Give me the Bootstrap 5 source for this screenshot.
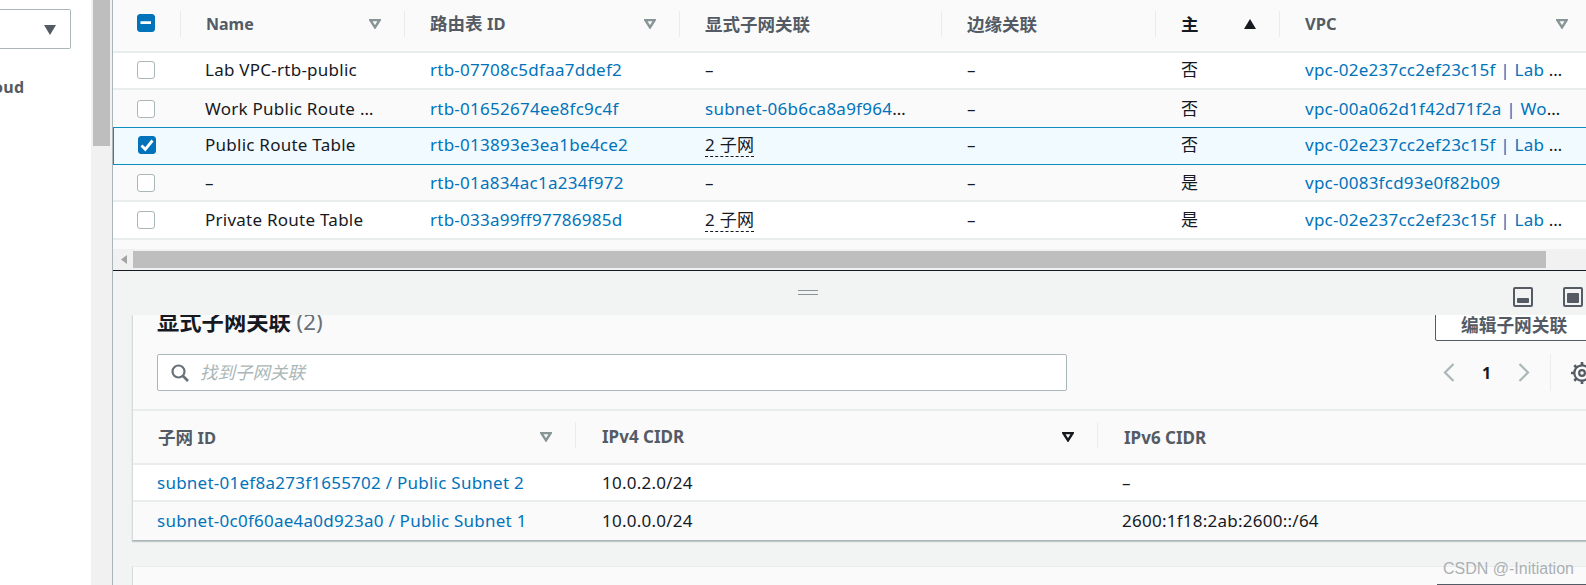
<!DOCTYPE html>
<html lang="zh">
<head>
<meta charset="utf-8">
<title>路由表</title>
<link href="https://cdn.jsdelivr.net/npm/bootstrap@5.3.0/dist/css/bootstrap.min.css" rel="stylesheet">
<style>
html,body{height:585px;overflow:hidden}
body{font-family:"Noto Sans","Noto Sans CJK SC",sans-serif;font-size:17px;letter-spacing:.25px;color:#16191f;background:#fff}
a{color:#0073bb;text-decoration:none}
.shell{width:1586px;height:585px}
.side{width:91px;flex:none;background:#fff;overflow:hidden}
.side-select{width:71px;height:40px;margin-top:9px;border:1px solid #aab7b8;border-left:0;border-radius:0 2px 2px 0;padding:15px 14px 0 0}
.side-text{margin-top:27px;margin-left:-7px;font-weight:700;font-size:16px;line-height:22px;color:#545b64}
.vtrack{width:21px;flex:none;background:#f1f1f1;padding:0 2px}
.vthumb{height:146px;background:#bebebe}
.work{width:1474px;flex:none;border-left:1px solid #aab7b8;overflow:hidden}
.top-pane{height:270px;background:#fafafa;overflow:hidden}
.table-clip{height:249px;overflow:hidden}
.rt{table-layout:fixed;width:1580px;margin:0;--bs-table-bg:transparent;border-collapse:separate;border-spacing:0}
.rt th,.rt td{padding:0 32px 0 26px;vertical-align:middle;white-space:nowrap;overflow:hidden;text-overflow:ellipsis;border-bottom:2px solid #eaeded;box-shadow:none;color:#16191f;font-weight:400;line-height:22px}
.rt th{height:53px;padding-bottom:4px;padding-right:27px;background:#fafafa;color:#545b64;font-weight:700;font-size:17.5px;letter-spacing:0}
.rt th.namecol{padding-left:26px}
.rt td.namecol{padding-left:25px;padding-right:27px}
.rt th.checkcell{padding-bottom:5px}
.rt tbody td{height:37px;background:#fff}
.rt tbody tr.alt td{background:#fafafa}
.rt tbody tr.sel td{background:#f1faff;border-top:1px solid #0f8fc0;border-bottom:1px solid #0f8fc0;height:38px}
.rt tbody tr.sel td:first-child{border-left:1px solid #0f8fc0}
.rt tbody tr.pre td{border-bottom:0}
.rt tbody tr.tall td{height:38px}
.rt tbody tr.up td{padding-bottom:2px}
.rt a{color:#0073bb}
.lat{font-size:16.5px}
.lat-n{font-size:16px}
.cidr{font-size:17px}
.hcell{display:flex;align-items:center;justify-content:space-between;position:relative}
.hcell .tri{flex:none;margin-right:-4px}
.rt th.sep,.st th.sep{background-image:linear-gradient(#eaeded,#eaeded);background-size:1px 26px;background-position:0 11px;background-repeat:no-repeat}
.rt th.dark{color:#16191f}
.rt .checkcell{padding-left:24px;padding-right:0}
.form-check-input.tick{width:18px;height:18px;margin:0;display:block;border:1px solid #aab7b8;border-radius:3px;background-color:#fff}
.form-check-input.tick:checked,.form-check-input.tick:indeterminate{background-color:#0073bb;border-color:#0073bb;background-size:18px 18px}
.form-check-input.tick:checked{--bs-form-check-bg-image:url("data:image/svg+xml,%3csvg xmlns='http://www.w3.org/2000/svg' viewBox='0 0 18 18'%3e%3cpath fill='none' stroke='%23fff' stroke-width='2.8' d='M3.5 9.5l3.8 3.8L14.5 4.5'/%3e%3c/svg%3e")}
.form-check-input.tick:indeterminate{--bs-form-check-bg-image:url("data:image/svg+xml,%3csvg xmlns='http://www.w3.org/2000/svg' viewBox='0 0 18 18'%3e%3cpath fill='none' stroke='%23fff' stroke-width='2.8' d='M3.5 8.6h10.5'/%3e%3c/svg%3e")}
.dash{text-decoration:underline dashed #16191f 1px;text-underline-offset:5px}
.vpc-cell{width:258px}
.vpc-head{width:259px}
.hbar{height:21px;background:#f1f1f1;padding:2px 0 0 2px;display:flex;align-items:flex-start}
.harrow{width:18px;height:17px;flex:none;display:flex;align-items:center;justify-content:center}
.hthumb{width:1413px;height:17px;background:#bebebe}
.divider{height:45px;background:#f2f3f3;border-top:1px solid #16191f;flex:none;position:relative}
.grip{width:20px;height:5px;margin:19px 84px 0 0;border-top:1px solid #879596;border-bottom:1px solid #879596}
.pane-ic{position:absolute;top:16px}
.pane-a{left:1400px}
.pane-b{left:1450px}
.panes svg{display:block}
.lower{height:270px;background:#f2f3f3;overflow:hidden;padding-left:19px}
.sub{width:1500px;height:226px;background:#fafafa;border-left:1px solid #d5dbdb;border-bottom:1px solid #aab7b8;box-shadow:0 1px 1px rgba(0,28,36,.2);overflow:hidden}
.sub-top{height:39px;padding-left:24px;position:relative;display:flow-root}
.sub-title{font-size:22.3px;line-height:30px;font-weight:700;margin-top:-8px;letter-spacing:0}
.sub-title span{font-weight:400;color:#687078}
.edit{position:absolute;left:1302px;top:-15px;width:170px;height:41px;background:#fff;border:1px solid #545b64;border-radius:2px;padding:8px 0 0 25px;font-weight:700;font-size:17.7px;line-height:22px;color:#545b64;text-align:left;letter-spacing:0}
.tools{height:57px;padding-left:24px;display:flex;align-items:flex-start;border-bottom:2px solid #eaeded}
.search{width:910px;height:37px;border:1px solid #aab7b8;border-radius:2px;background:#fff;display:flex;align-items:center;padding-left:13px;gap:11px;font-size:17.5px;font-style:italic;color:#aab7b8;letter-spacing:0}
.pager{margin-left:376px;display:flex;align-items:center;height:37px}
.pnum{margin-left:27px;margin-right:30px;font-weight:700;line-height:1;width:6px;font-size:16px}
.pbar{width:1px;height:37px;background:#eaeded;margin:0 20px 0 20px}
.st{table-layout:fixed;width:1480px;margin:0;--bs-table-bg:transparent;border-collapse:separate;border-spacing:0}
.st th,.st td{padding:0 16px 0 25px;vertical-align:middle;white-space:nowrap;border-bottom:2px solid #eaeded;box-shadow:none;color:#16191f;font-weight:400;line-height:22px}
.st td.first{padding-left:24px}
.st td.v4{padding-left:27px}
.st th{height:54px;padding-right:27px;color:#545b64;font-weight:700;font-size:17.5px;letter-spacing:0}
.st th.sep{padding-left:27px}
.st td{height:37px;background:#fff}
.st tr.alt td{background:#fafafa;border-bottom:0}
.next-card{margin-top:25px;height:30px;width:1500px;background:#fafafa;border-left:1px solid #d5dbdb;border-top:1px solid #eaeded;padding:17px 0 0 1304px}
.next-btn{height:6px;border-top:1px solid #545b64}
.mark-w{position:absolute;left:1443px;top:557px;font-family:"Liberation Sans",sans-serif;font-size:16px;letter-spacing:0;line-height:24px;color:#aab0b4}
</style>
</head>
<body>
<div class="shell d-flex">
  <aside class="side">
    <div class="side-select d-flex justify-content-end">
      <svg width="12" height="10" viewBox="0 0 12 10"><path d="M0 0H12L6 10Z" fill="#545b64"/></svg>
    </div>
    <div class="side-text">oud</div>
  </aside>
  <div class="vtrack"><div class="vthumb"></div></div>
  <main class="work d-flex flex-column panes">
    <section class="top-pane">
      <div class="table-clip">
        <table class="table rt">
          <colgroup><col style="width:67px"><col style="width:224px"><col style="width:275px"><col style="width:262px"><col style="width:214px"><col style="width:124px"><col style="width:414px"></colgroup>
          <thead><tr>
            <th class="checkcell"><input class="form-check-input tick" type="checkbox" id="allrows" aria-label="全选"></th>
            <th class="sep namecol"><div class="hcell"><span class="lat-n">Name</span><svg class="tri" width="12" height="10" viewBox="0 0 12 10"><path d="M1.3 1H10.7L6 8.4Z" fill="none" stroke="#879596" stroke-width="2.4"/></svg></div></th>
            <th class="sep"><div class="hcell"><span>路由表 <span class="lat">ID</span></span><svg class="tri" width="12" height="10" viewBox="0 0 12 10"><path d="M1.3 1H10.7L6 8.4Z" fill="none" stroke="#879596" stroke-width="2.4"/></svg></div></th>
            <th class="sep">显式子网关联</th>
            <th class="sep">边缘关联</th>
            <th class="sep dark"><div class="hcell">主<svg class="tri" width="12" height="10" viewBox="0 0 12 10"><path d="M0 10H12L6 0Z" fill="#16191f"/></svg></div></th>
            <th class="sep"><div class="hcell vpc-head"><span class="lat">VPC</span><svg class="tri" width="12" height="10" viewBox="0 0 12 10"><path d="M1.3 1H10.7L6 8.4Z" fill="none" stroke="#879596" stroke-width="2.4"/></svg></div></th>
          </tr></thead>
          <tbody>
            <tr class="up"><td class="checkcell"><input class="form-check-input tick" type="checkbox" aria-label="选择"></td><td class="namecol">Lab VPC-rtb-public</td><td><a href="#">rtb-07708c5dfaa7ddef2</a></td><td>–</td><td>–</td><td>否</td><td><div class="text-truncate vpc-cell"><a href="#">vpc-02e237cc2ef23c15f | Lab VPC Network</a></div></td></tr>
            <tr class="alt pre"><td class="checkcell"><input class="form-check-input tick" type="checkbox" aria-label="选择"></td><td class="namecol">Work Public Route Table</td><td><a href="#">rtb-01652674ee8fc9c4f</a></td><td><a href="#">subnet-06b6ca8a9f96412ab</a></td><td>–</td><td>否</td><td><div class="text-truncate vpc-cell"><a href="#">vpc-00a062d1f42d71f2a | Work VPC</a></div></td></tr>
            <tr class="sel up"><td class="checkcell"><input class="form-check-input tick" type="checkbox" checked aria-label="选择"></td><td class="namecol">Public Route Table</td><td><a href="#">rtb-013893e3ea1be4ce2</a></td><td><span class="dash">2 子网</span></td><td>–</td><td>否</td><td><div class="text-truncate vpc-cell"><a href="#">vpc-02e237cc2ef23c15f | Lab VPC Network</a></div></td></tr>
            <tr class="alt"><td class="checkcell"><input class="form-check-input tick" type="checkbox" aria-label="选择"></td><td class="namecol">–</td><td><a href="#">rtb-01a834ac1a234f972</a></td><td>–</td><td>–</td><td>是</td><td><a href="#">vpc-0083fcd93e0f82b09</a></td></tr>
            <tr class="tall"><td class="checkcell"><input class="form-check-input tick" type="checkbox" aria-label="选择"></td><td class="namecol">Private Route Table</td><td><a href="#">rtb-033a99ff97786985d</a></td><td><span class="dash">2 子网</span></td><td>–</td><td>是</td><td><div class="text-truncate vpc-cell"><a href="#">vpc-02e237cc2ef23c15f | Lab VPC Network</a></div></td></tr>
            <tr class="alt"><td class="checkcell"><input class="form-check-input tick" type="checkbox" aria-label="选择"></td><td></td><td></td><td></td><td></td><td></td><td></td></tr>
          </tbody>
        </table>
      </div>
      <div class="hbar">
        <div class="harrow"><svg width="6" height="9" viewBox="0 0 6 9"><path d="M6 0V9L0 4.5Z" fill="#a3a3a3"/></svg></div>
        <div class="hthumb"></div>
      </div>
    </section>
    <div class="divider d-flex align-items-start justify-content-center">
      <div class="grip"></div>
      <svg class="pane-ic pane-a" width="20" height="20" viewBox="0 0 20 20"><rect x="1" y="1" width="18" height="18" rx="1" fill="none" stroke="#545b64" stroke-width="2"/><rect x="4" y="11" width="12" height="5" rx="1" fill="#545b64"/></svg>
      <svg class="pane-ic pane-b" width="20" height="20" viewBox="0 0 20 20"><rect x="1" y="1" width="18" height="18" rx="1" fill="none" stroke="#545b64" stroke-width="2"/><rect x="4" y="6" width="12" height="10" rx="1" fill="#545b64"/></svg>
    </div>
    <section class="lower">
      <div class="sub">
        <div class="sub-top">
          <div class="sub-title">显式子网关联 <span>(2)</span></div>
          <button type="button" class="edit">编辑子网关联</button>
        </div>
        <div class="tools">
          <div class="search">
            <svg width="18" height="18" viewBox="0 0 18 18"><circle cx="7.5" cy="7.5" r="6" fill="none" stroke="#687078" stroke-width="2.2"/><path d="M12 12L17 17" stroke="#687078" stroke-width="2.6"/></svg>
            <span>找到子网关联</span>
          </div>
          <div class="pager">
            <svg width="12" height="19" viewBox="0 0 12 19"><path d="M10.5 1L2 9.5L10.5 18" fill="none" stroke="#aab7b8" stroke-width="2.2"/></svg>
            <span class="pnum">1</span>
            <svg width="12" height="19" viewBox="0 0 12 19"><path d="M1.5 1L10 9.5L1.5 18" fill="none" stroke="#aab7b8" stroke-width="2.2"/></svg>
            <span class="pbar"></span>
            <svg class="flex-shrink-0" width="22" height="22" viewBox="0 0 20 20"><circle cx="10" cy="10" r="7" fill="none" stroke="#545b64" stroke-width="2"/><circle cx="10" cy="10" r="2.6" fill="none" stroke="#545b64" stroke-width="2"/><path d="M10 0V3M10 17V20M0 10H3M17 10H20M3 3L5 5M15 15L17 17M3 17L5 15M15 5L17 3" stroke="#545b64" stroke-width="2.4"/></svg>
          </div>
        </div>
        <table class="table st">
          <colgroup><col style="width:442px"><col style="width:522px"><col style="width:516px"></colgroup>
          <thead><tr>
            <th><div class="hcell"><span>子网 <span class="lat">ID</span></span><svg class="tri" width="12" height="10" viewBox="0 0 12 10"><path d="M1.3 1H10.7L6 8.4Z" fill="none" stroke="#879596" stroke-width="2.4"/></svg></div></th>
            <th class="sep"><div class="hcell"><span class="cidr">IPv4 CIDR</span><svg class="tri" width="12" height="10" viewBox="0 0 12 10"><path d="M1.3 1H10.7L6 8.4Z" fill="none" stroke="#16191f" stroke-width="2.4"/></svg></div></th>
            <th class="sep"><span class="cidr">IPv6 CIDR</span></th>
          </tr></thead>
          <tbody>
            <tr><td class="first"><a href="#">subnet-01ef8a273f1655702 / Public Subnet 2</a></td><td class="v4">10.0.2.0/24</td><td>–</td></tr>
            <tr class="alt"><td class="first"><a href="#">subnet-0c0f60ae4a0d923a0 / Public Subnet 1</a></td><td class="v4">10.0.0.0/24</td><td>2600:1f18:2ab:2600::/64</td></tr>
          </tbody>
        </table>
      </div>
      <div class="next-card"><div class="next-btn"></div></div>
    </section>
  </main>
</div>
<div class="mark-w">CSDN @-Initiation</div>
<script src="https://cdn.jsdelivr.net/npm/bootstrap@5.3.0/dist/js/bootstrap.bundle.min.js"></script>
<script>document.getElementById('allrows').indeterminate=true;</script>
</body>
</html>
